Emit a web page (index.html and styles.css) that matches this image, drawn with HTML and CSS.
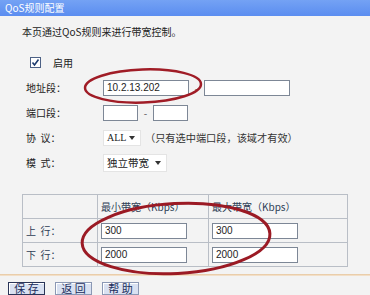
FILE: index.html
```html
<!DOCTYPE html>
<html lang="zh">
<head>
  <meta charset="UTF-8">
  <title>QoS规则配置</title>
  <link rel="stylesheet" href="styles.css">
</head>
<body>

  <div class="page">
    <div class="title-bar">QoS规则配置</div>
    <p class="intro">本页通过QoS规则来进行带宽控制。</p>

    <div class="form">
      <div class="row">
        <span class="check">
          <svg width="9" height="9" viewBox="0 0 9 9"><path d="M1.5 4.5 L3.5 7 L7.5 1.5" fill="none" stroke="#1d3b6e" stroke-width="1.6"/></svg>
        </span>
        <span class="check-label">启用</span>
      </div>
      <div class="row">
        <span class="label">地址段：</span>
        <span class="field wide">10.2.13.202</span>
        <span class="dash">-</span>
        <span class="field wide"></span>
      </div>
      <div class="row">
        <span class="label">端口段：</span>
        <span class="field short"></span>
        <span class="dash">-</span>
        <span class="field short"></span>
      </div>
      <div class="row">
        <span class="label">协&nbsp;&nbsp;议：</span>
        <span class="select">ALL <i class="arrow"></i></span>
        <span class="hint">（只有选中端口段，该域才有效）</span>
      </div>
      <div class="row">
        <span class="label">模&nbsp;&nbsp;式：</span>
        <span class="select mode">独立带宽 <i class="arrow"></i></span>
      </div>
    </div>

    <table class="bw-table">
      <tr>
        <td class="col-label"></td>
        <td class="col-min">最小带宽（Kbps）</td>
        <td class="col-max">最大带宽（Kbps）</td>
      </tr>
      <tr>
        <td>上&nbsp;&nbsp;行：</td>
        <td><span class="field cell">300</span></td>
        <td><span class="field cell">300</span></td>
      </tr>
      <tr>
        <td>下&nbsp;&nbsp;行：</td>
        <td><span class="field cell">2000</span></td>
        <td><span class="field cell">2000</span></td>
      </tr>
    </table>

    <div class="separator"></div>

    <div class="buttons">
      <button class="btn active">保&nbsp;存</button>
      <button class="btn">返&nbsp;回</button>
      <button class="btn">帮&nbsp;助</button>
    </div>

    <!-- hand drawn marks over the screenshot -->
    <svg class="marks" width="370" height="295" viewBox="0 0 370 295">
      <ellipse cx="143" cy="86" rx="58" ry="16.5" transform="rotate(-2 143 86)" fill="none" stroke="#a01c26" stroke-width="2.5"/>
      <ellipse cx="176" cy="238.5" rx="94" ry="35" transform="rotate(-3 176 238)" fill="none" stroke="#9b1a24" stroke-width="3"/>
    </svg>
  </div>

</body>
</html>
```

FILE: styles.css
```css
* {
  margin: 0;
  padding: 0;
  box-sizing: border-box;
}
body {
  font-family: "Noto Sans CJK SC", "DejaVu Sans", sans-serif;
  font-size: 10px;
  color: #222;
  background: #f3f3f3;
}
.page {
  position: relative;
  width: 370px;
  height: 295px;
  overflow: hidden;
}
.title-bar {
  height: 16px;
  line-height: 16px;
  padding-left: 5px;
  font-size: 10px;
  color: #fff;
  background: linear-gradient(#74a2f4, #5b8df0);
}
.intro {
  margin-top: 9px;
  padding-left: 22px;
  line-height: 14px;
}
.form {
  margin-top: 11px;
}
.row {
  display: flex;
  align-items: center;
  height: 25px;
}
.check {
  display: flex;
  align-items: center;
  justify-content: center;
  width: 11px;
  height: 11px;
  margin-left: 30px;
  border: 1px solid #4d6185;
  background: #fff;
}
.check-label {
  margin-left: 12px;
}
.label {
  width: 103px;
  padding-left: 26px;
}
.field {
  display: block;
  height: 16px;
  line-height: 14px;
  padding-left: 3px;
  background: #fff;
  border: 1px solid #7d8796;
  font-family: "Liberation Sans", Arial, sans-serif;
  font-size: 10px;
}
.field.wide {
  width: 86px;
}
.field.short {
  width: 35px;
}
.dash {
  width: 15px;
  text-align: center;
  color: #555;
}
.select {
  display: flex;
  align-items: center;
  justify-content: space-between;
  width: 38px;
  height: 16px;
  padding: 0 5px 0 3px;
  background: #fff;
  border: 1px solid #e4e4e4;
  font-family: "Liberation Serif", serif;
  font-size: 10px;
}
.select.mode {
  width: 64px;
  height: 18px;
  font-family: inherit;
  font-size: 10.5px;
}
.arrow {
  border-left: 3.5px solid transparent;
  border-right: 3.5px solid transparent;
  border-top: 4px solid #333;
}
.hint {
  margin-left: 4px;
  font-size: 10.2px;
  color: #333;
}
.bw-table {
  margin: 19px 0 0 22px;
  width: 326px;
  border-collapse: collapse;
  color: #2e3d55;
}
.bw-table td {
  height: 24px;
  padding-left: 3px;
  border: 1px solid #b9bec6;
}
.col-label {
  width: 75px;
}
.col-min {
  width: 111px;
}
.field.cell {
  width: 86px;
  color: #222;
}
.separator {
  margin-top: 7px;
  height: 2px;
  background: linear-gradient(#e6c59c, #f6e8d6);
}
.buttons {
  display: flex;
  gap: 10px;
  margin: 6px 0 0 8px;
}
.btn {
  width: 37px;
  height: 13px;
  font-family: inherit;
  font-size: 11px;
  line-height: 11px;
  color: #1c2d5c;
  background: #d9e1f1;
  border: 1px solid #8b98b4;
  box-shadow: inset 1px 1px 0 #fff;
}
.btn.active {
  border-color: #2a3558;
}
.marks {
  position: absolute;
  left: 0;
  top: 0;
  pointer-events: none;
}
```
